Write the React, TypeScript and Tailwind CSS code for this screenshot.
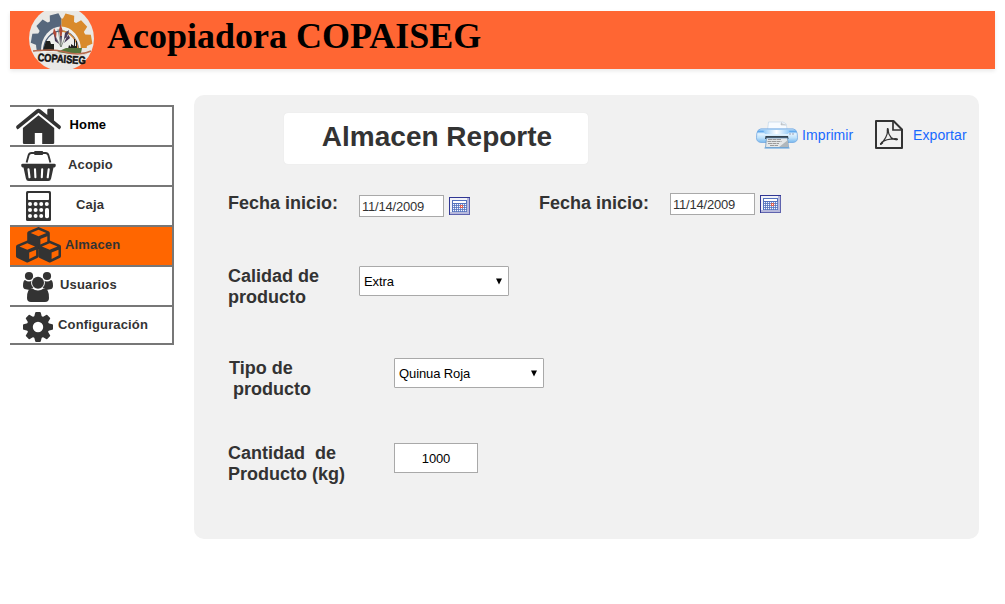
import React from "react";

const dark = "#333333";

function Logo() {
  return (
    <svg className="ml-[19px] block h-[59px] w-[65px] shrink-0" viewBox="29 11 65 59">
      <defs>
        <clipPath id="disc"><circle cx="61.5" cy="38.5" r="32.5" /></clipPath>
        <clipPath id="leftHalf"><rect x="29" y="8" width="32.5" height="42" /></clipPath>
        <clipPath id="rightHalf"><rect x="61.5" y="8" width="33" height="40" /></clipPath>
        <clipPath id="dome"><path d="M41 50a20 22 0 0 1 40 0v3H41z" /></clipPath>
      </defs>
      <g clipPath="url(#disc)">
        <rect x="29" y="6" width="65" height="66" fill="#e9e8e5" />
        <g clipPath="url(#leftHalf)" fill="#56677c">
          <circle cx="61.5" cy="44" r="25.5" />
          {[-15, -47, -80].map((a) => (
            <path key={a} d="M56 20l1.500-6.500h9L68 20z" transform={`rotate(${a} 61.5 44)`} />
          ))}
        </g>
        <g clipPath="url(#rightHalf)" fill="#d98a2c">
          <circle cx="61.5" cy="44" r="25.5" />
          {[15, 47, 80].map((a) => (
            <path key={a} d="M56 20l1.500-6.500h9L68 20z" transform={`rotate(${a} 61.5 44)`} />
          ))}
        </g>
        <path d="M41 50a20 23.500 0 0 1 40 0v3H41z" fill="#eeeeec" />
        <g clipPath="url(#dome)">
          <path d="M43.500 51a17.500 20 0 0 1 35 0" fill="none" stroke="#4e607a" strokeWidth="1.3" />
          <path d="M61 31a18 20 0 0 1 17 20" fill="none" stroke="#d68a3b" strokeWidth="1.300" />
          <path d="M61 47l-3-18M61 47V28M61 47l6-14M61 47l-7-13" stroke="#6d756b" strokeWidth=".7" />
        </g>
        <path d="M56 39l-3-6 1-5 2.500 5zM60 36l-1-6 1.500-6 2 6-1 7z" fill="#b24a37" />
        <path d="M64 39l1-6 4-3-1 6zM54 34l2 4 3 6-4-3zM68 34l-4 9 6-5zM60 36l1 8 1-8z" fill="#493a58" />
        <path d="M44 47l2-6h4l1 3h3v7H43zM69 45l2 2v-3l3 2v-7h1v7h1v-5h1v8h-9z" fill="#20211f" />
        <path d="M57 52l9-4 16 0-1 5-11 1z" fill="#56763b" />
        <path d="M33 51c12-1 20-2 32 1 10 3 18 3 26-1" fill="none" stroke="#b86a4c" strokeWidth="1.500" />
        <path d="M46 53c11-1 16 1 24 3 6 1 11 0 16-2" fill="none" stroke="#ddd3c6" strokeWidth="1.200" />
      </g>
      <text x="37.500" y="61" fontFamily="'Liberation Sans', sans-serif" fontWeight="700" fontSize="11" textLength="48" lengthAdjust="spacingAndGlyphs" fill="#111" stroke="#111" strokeWidth=".5" transform="rotate(4 38 60)">COPAISEG</text>
    </svg>
  );
}

function HomeIcon() {
  return (
    <g fill={dark}>
      <path d="M38.500 108.700q1 0 2 .8l6.800 5.500v-5.500l.7-.8h5.400l.6.8v11l6.400 5.200q1.200 1.300.1 2.500l-1.200 1.200-20.800-16.600-20.800 16.600-1.200-1.200q-1-1.200.1-2.500l19.900-16.200q1-.8 2-.8z" />
      <path d="M38.500 115.200L54.200 128v15.200l-.8.8H42.200v-10.900h-7.400V144H23.700l-.8-.8V128z" />
    </g>
  );
}

function BasketIcon() {
  return (
    <g>
      <path d="M26.600 162.500l2-7.200q.6-2.300 2.800-2.300h14.200q2.200 0 2.800 2.300l2 7.200" fill="none" stroke={dark} strokeWidth="1.900" />
      <rect x="34" y="151" width="9.200" height="4" rx="1.200" fill={dark} />
      <path d="M22.500 163.700h32q1.600 0 1.300 1.500l-.4 1.500q-.3.800-1.300.8h-.6l-2.400 11q-.5 2.500-2.800 2.500H28.700q-2.300 0-2.800-2.500l-2.400-11h-.6q-1 0-1.300-.8l-.4-1.500q-.3-1.500 1.300-1.500z" fill={dark} />
      <path d="M28.500 169.300l1 8M35 169.300l.4 8M42.200 169.300l-.4 8M48.700 169.300l-1 8" stroke="white" strokeWidth="2.100" strokeLinecap="round" />
    </g>
  );
}

function CalculatorIcon() {
  return (
    <g>
      <rect x="26" y="191" width="25" height="30" rx="1.500" fill={dark} />
      <rect x="28" y="193" width="21" height="7" rx=".7" fill="white" />
      <g fill="white">
        {[204, 210, 216].map((y) => [30, 35.6, 41.2, 46.8].map((x) =>
          x === 46.8 && y > 204 ? null : <circle key={`${x}-${y}`} cx={x} cy={y} r="2" />
        ))}
        <rect x="45" y="208" width="4" height="10.300" rx="1.800" />
      </g>
    </g>
  );
}

function Cube({ x, y }: { x: number; y: number }) {
  return (
    <g transform={`translate(${x} ${y})`}>
      <path d="M0-10.500L10-6.300q1.300.6 1.300 2V5q0 1.300-1.300 2L1 11.300q-1 .5-2 0L-10 7q-1.300-.7-1.300-2v-9.300q0-1.400 1.300-2z" fill={dark} />
      <path d="M0-7.700L7.800-4.500 0-1.200-7.800-4.500zM1.900 1.600L8.800-1.300v5.800L1.900 8z" fill="#ff6600" />
    </g>
  );
}

function CubesIcon() {
  return <g><Cube x={38.5} y={237.5} /><Cube x={27.3} y={251} /><Cube x={49.700} y={251} /></g>;
}

function UsersIcon() {
  return (
    <g fill={dark}>
      <circle cx="29" cy="276" r="4.100" /><circle cx="47" cy="276" r="4.100" />
      <path d="M25 280q2 1.600 4 1.600 1.700 0 3.200-.8-.5 4 2 6.800-3 .1-4.700 2.400l-3.700-.8Q23 289 23 286q0-5.500 2-6zM51 280q-2 1.600-4 1.600-1.700 0-3.200-.8.5 4-2 6.800 3 .1 4.700 2.400l3.700-.8Q53 289 53 286q0-5.500-2-6z" />
      <circle cx="38" cy="282.700" r="6.900" fill="white" />
      <circle cx="38" cy="282.700" r="6" />
      <path d="M32 288.300q3 2.200 6 2.200t6-2.200q5 0 5 9.700 0 4-4 4H31q-4 0-4-4 0-9.700 5-9.700z" />
    </g>
  );
}

function GearIcon() {
  return (
    <g transform="translate(38 327)" fill={dark}>
      {[0, 45, 90, 135, 180, 225, 270, 315].map((a) => (
        <path key={a} d="M-4-9.500l1.200-4.800q.2-.7.9-.7h3.800q.7 0 .9.700L4-9.500z" transform={`rotate(${a})`} />
      ))}
      <circle r="8.200" fill="none" stroke={dark} strokeWidth="6" />
    </g>
  );
}

function PrinterIcon() {
  return (
    <svg className="block h-[28px] w-[42px]" viewBox="756 121 42 28">
      <defs>
        <linearGradient id="printerBody" x1="0" y1="0" x2="0" y2="1">
          <stop offset="0" stopColor="#cfe8fc" /><stop offset=".2" stopColor="#60a9ed" />
          <stop offset=".36" stopColor="#e6f5ff" /><stop offset=".65" stopColor="#bfe2fb" /><stop offset="1" stopColor="#78b8ee" />
        </linearGradient>
        <linearGradient id="tray" x1="0" y1="0" x2="1" y2="0">
          <stop offset="0" stopColor="#8fc8f6" /><stop offset=".5" stopColor="#fff" /><stop offset="1" stopColor="#8fc8f6" />
        </linearGradient>
      </defs>
      <path d="M767.500 130l1-8h14.500l3.300 2 .8 6z" fill="#f7fbff" stroke="#c3d7e9" strokeWidth=".7" />
      <path d="M781.500 122.500l-.5 2.300 5 .2" fill="#d8dde2" stroke="#a2a8ad" strokeWidth=".6" />
      <path d="M761 128.800h32q3 0 4.200 4.500l.3 4.500q0 4.300-4.500 4.700h-32q-4.500-.4-4.500-4.700l.3-4.500q1.200-4.500 4.200-4.500z" fill="url(#printerBody)" stroke="#75aae2" strokeWidth=".8" />
      <path d="M763 130h27l-2 4h-23z" fill="url(#tray)" />
      <path d="M765.500 136h22.500l.5 3h-23.500z" fill="#36434d" />
      <path d="M766.500 138h21l1 9.500h-23z" fill="#e5e7e8" stroke="#5d8fbd" strokeWidth=".7" />
      <path d="M768 139.500h13M767.500 141.500h14M768 143.500h11M770 145.500h8" stroke="#888" strokeWidth=".8" strokeDasharray="4 .5" />
      <path d="M779 147l9-7v7z" fill="#b0b7bc" />
      <path d="M764.500 148h25" stroke="#5a9edd" />
      <path d="M789 134h2m1 0h2" stroke="#9d9fb5" />
    </svg>
  );
}

function PdfIcon() {
  return (
    <svg className="block h-[29px] w-[28px]" viewBox="875 120 28 29" fill="none" stroke={dark}>
      <path d="M876 121h17.500l8.500 8.500V148H876z" strokeWidth="2" strokeLinejoin="round" />
      <path d="M893 121v9h9" strokeWidth="1.700" />
      <path d="M887.700 129q-.1 5.500-2 8.500-2.200 3.800-5 6.500M887.900 129.500q.4 5 3.200 8 2.500 2.300 6 2M881.500 142.500q5-4 15.500-3.500" strokeWidth="1.250" strokeLinecap="round" />
      <path d="M887.700 128.800v2.200M880.800 144l1.600-1.200M895 139l2 .4" strokeWidth="1.800" strokeLinecap="round" />
    </svg>
  );
}

function CalendarButton() {
  return (
    <button aria-label="Calendario" className="ml-[5px] block h-[18px] w-[21px]">
      <svg className="block" width="21" height="18" viewBox="0 0 21 18">
        <path d="M0 0h21v18H0z" fill="#313794" /><path d="M20 1h1v17H1v-1h19z" fill="#5f63ae" />
        <path d="M1 1h19v16H1z" fill="#b7b9dc" /><path d="M1 1h17v14H1z" fill="#f1f2f8" />
        <path d="M3 3h15v12H3z" fill="#5472bd" /><path d="M4 4h13v2H4z" fill="#fff" />
        {[7, 9, 11, 13].map((y) => [4, 6, 8, 10, 12, 14, 16].map((x) =>
          <rect key={`${x}-${y}`} x={x} y={y} width="1.200" height="1.200" fill="#f5f8ff" />
        ))}
        <path d="M11.500 8.500h2v2h-2z" fill="#fff" stroke="#ef5b3b" />
      </svg>
    </button>
  );
}

const items = [
  { name: "Home", y: 107, gap: "pl-[7.500px]", color: "text-black", icon: <HomeIcon /> },
  { name: "Acopio", y: 147, gap: "pl-[6px]", color: "text-[#333]", icon: <BasketIcon /> },
  { name: "Caja", y: 187, gap: "pl-[14px]", color: "text-[#333]", icon: <CalculatorIcon /> },
  { name: "Almacen", y: 227, gap: "pl-[3px]", color: "text-[#333]", icon: <CubesIcon /> },
  { name: "Usuarios", y: 267, gap: "-ml-[2px]", color: "text-[#333]", icon: <UsersIcon /> },
  { name: "Configuración", y: 307, gap: "-ml-[4px]", color: "text-[#333]", icon: <GearIcon /> },
];

function SelectBox({ value }: { value: string }) {
  return (
    <div className="flex h-[30px] w-[150px] items-center justify-between rounded-[1px] border border-[#a9a9a9] bg-white pr-[6px] pl-[4px] text-[13px] tracking-[-0.100px] text-black">
      <span>{value}</span>
      <svg width="6" height="7" viewBox="0 0 6 7"><path d="M0 .5h6L3 6.500z" /></svg>
    </div>
  );
}

function DateBox() {
  return <input aria-label="Fecha" className="block h-[22px] w-[85px] border border-[#a9a9a9] bg-white pl-[2px] text-[13px] tracking-[-0.200px] text-[#333] outline-none" defaultValue="11/14/2009" />;
}

export default function App() {
  return (
    <div className="h-[604px] w-[1005px] overflow-hidden bg-white pt-[11px] pl-[10px] font-['Liberation_Sans',Arial,sans-serif] text-[#333]">
      <header className="flex h-[58px] w-[985px] bg-[#ff6633] shadow-[0_2px_4px_rgba(0,0,0,0.09)]">
        <Logo />
        <h1 className="ml-[13px] pt-[5px] font-['Liberation_Serif',serif] text-[36px] leading-[41px] font-bold text-black">Acopiadora COPAISEG</h1>
      </header>
      <div className="flex items-start pt-[26px]">
        <nav className="mt-[10px] w-[164px] border-t-2 border-r-2 border-[#777]">
          {items.map((item) => (
            <a key={item.name} className={`flex border-b-2 border-[#777] ${item.name === "Configuración" ? "h-[38px]" : "h-[40px]"} ${item.name === "Almacen" ? "bg-[#ff6600]" : "bg-white"}`}>
              <svg className="block h-[38px] w-[52px] shrink-0" viewBox={`10 ${item.y} 52 38`}>{item.icon}</svg>
              <span className={`pt-[10px] text-[13px] leading-[15px] font-bold tracking-[0.15px] ${item.gap} ${item.color}`}>{item.name}</span>
            </a>
          ))}
        </nav>
        <main className="ml-[20px] h-[444px] w-[785px] rounded-[10px] bg-[#f1f1f1] pt-[18px] text-[18px] leading-[21px] font-bold">
          <div className="flex h-[51px]">
            <h2 className="ml-[90px] w-[304px] rounded-[4px] bg-white pt-[8px] pl-[2px] text-center text-[28px] leading-[32px] shadow-[0_0_1px_#ddd]">Almacen Reporte</h2>
            <div className="ml-[168px] flex text-[14px] leading-[16px] font-normal text-[#1769ff]">
              <div className="mt-[8px]"><PrinterIcon /></div>
              <a className="mt-[14px] ml-[4px] w-[73px] tracking-[0.100px]">Imprimir</a>
              <div className="mt-[7px]"><PdfIcon /></div>
              <a className="mt-[14px] ml-[10px] tracking-[0.100px]">Exportar</a>
            </div>
          </div>
          <div className="mt-[28px] flex h-[74px] pl-[34px] font-normal">
            <label className="w-[131px] pt-px font-bold">Fecha inicio:</label>
            <div className="mt-[3px] flex items-start"><DateBox /><div className="mt-[2px]"><CalendarButton /></div></div>
            <label className="ml-[69px] w-[131px] pt-px font-bold">Fecha inicio:</label>
            <div className="mt-[1px] flex items-start"><DateBox /><div className="mt-[2px]"><CalendarButton /></div></div>
          </div>
          <div className="flex h-[92px] pl-[34px]">
            <label className="w-[131px] pr-[20px]">Calidad de producto</label>
            <div className="font-normal"><SelectBox value="Extra" /></div>
          </div>
          <div className="flex h-[85px] pl-[35px]">
            <label className="w-[165px] whitespace-pre">{"Tipo de\n"}<span className="pl-[4px]">producto</span></label>
            <div className="font-normal"><SelectBox value="Quinua Roja" /></div>
          </div>
          <div className="flex pl-[34px]">
            <label className="w-[166px] whitespace-pre">{"Cantidad  de\nProducto (kg)"}</label>
            <input aria-label="Cantidad" className="block h-[30px] w-[84px] border border-[#a9a9a9] bg-white text-center text-[13px] font-normal tracking-[-0.150px] text-black outline-none" defaultValue="1000" />
          </div>
        </main>
      </div>
    </div>
  );
}
